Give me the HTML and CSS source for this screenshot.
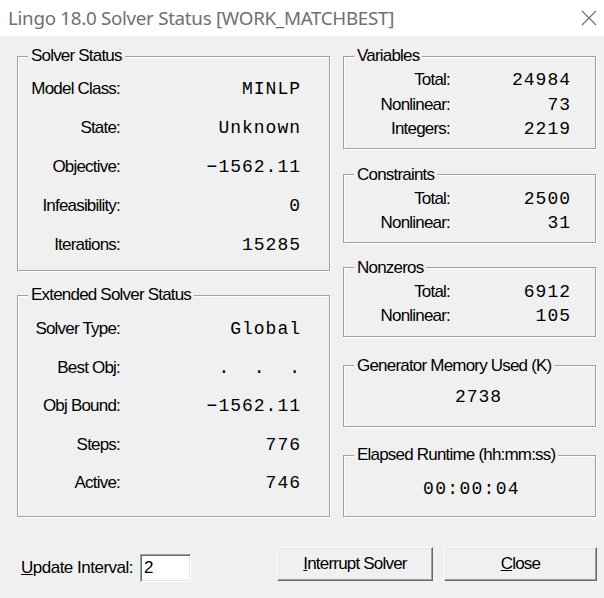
FILE: index.html
```html
<!DOCTYPE html>
<html>
<head>
<meta charset="utf-8">
<title>Lingo 18.0 Solver Status</title>
<link rel="stylesheet" href="styles.css">
</head>
<body>
<div class="titlebar">
  <span class="title">Lingo 18.0 Solver Status [WORK_MATCHBEST]</span>
  <svg class="close-x" width="16" height="16" viewBox="0 0 16 16"><path d="M1 1 L15 15 M15 1 L1 15" stroke="#6e6e6e" stroke-width="1.1" fill="none"/></svg>
</div>
<div class="main">
  <div class="col-left">
    <fieldset class="group g-solver">
      <legend>Solver Status</legend>
      <div class="rows-left r39">
        <span class="lbl">Model Class:</span><span class="val">MINLP</span>
        <span class="lbl">State:</span><span class="val">Unknown</span>
        <span class="lbl">Objective:</span><span class="val">&minus;1562.11</span>
        <span class="lbl">Infeasibility:</span><span class="val">0</span>
        <span class="lbl">Iterations:</span><span class="val">15285</span>
      </div>
    </fieldset>
    <fieldset class="group g-ext">
      <legend>Extended Solver Status</legend>
      <div class="rows-left r38">
        <span class="lbl">Solver Type:</span><span class="val">Global</span>
        <span class="lbl">Best Obj:</span><span class="val pre">.  .  .</span>
        <span class="lbl">Obj Bound:</span><span class="val">&minus;1562.11</span>
        <span class="lbl">Steps:</span><span class="val">776</span>
        <span class="lbl">Active:</span><span class="val">746</span>
      </div>
    </fieldset>
  </div>
  <div class="col-right">
    <fieldset class="group g-vars">
      <legend>Variables</legend>
      <div class="rows-right">
        <span class="lbl">Total:</span><span class="val">24984</span>
        <span class="lbl">Nonlinear:</span><span class="val">73</span>
        <span class="lbl">Integers:</span><span class="val">2219</span>
      </div>
    </fieldset>
    <fieldset class="group g-cons">
      <legend>Constraints</legend>
      <div class="rows-right">
        <span class="lbl">Total:</span><span class="val">2500</span>
        <span class="lbl">Nonlinear:</span><span class="val">31</span>
      </div>
    </fieldset>
    <fieldset class="group g-nz">
      <legend>Nonzeros</legend>
      <div class="rows-right">
        <span class="lbl">Total:</span><span class="val">6912</span>
        <span class="lbl">Nonlinear:</span><span class="val">105</span>
      </div>
    </fieldset>
    <fieldset class="group g-mem">
      <legend>Generator Memory Used (K)</legend>
      <div class="single mem-val">2738</div>
    </fieldset>
    <fieldset class="group g-time">
      <legend>Elapsed Runtime (hh:mm:ss)</legend>
      <div class="single time-val">00:00:04</div>
    </fieldset>
  </div>
</div>
<div class="bottom">
  <div class="interval">
    <span class="int-label"><u>U</u>pdate Interval:</span>
    <span class="input">2</span>
  </div>
  <div class="buttons">
    <span class="btn btn-int"><u>I</u>nterrupt Solver</span>
    <span class="btn btn-close"><u>C</u>lose</span>
  </div>
</div>
</body>
</html>
```
FILE: styles.css
```css
* { box-sizing: border-box; }
html, body { margin: 0; padding: 0; }
body {
  width: 604px;
  height: 598px;
  background: #f0f0f0;
  font-family: "Liberation Sans", Arial, sans-serif;
  font-size: 17px;
  letter-spacing: -0.8px;
  color: #000;
  overflow: hidden;
}
.titlebar {
  height: 36px;
  background: #fff;
  display: flex;
  align-items: center;
  justify-content: space-between;
  padding: 0 5px 0 8px;
}
.title {
  font-family: "Noto Sans", "Liberation Sans", sans-serif;
  font-size: 18.8px;
  letter-spacing: -0.3px;
  color: #707070;
  line-height: 20px;
}
.close-x { display: block; margin-right: 2px; }

.main {
  display: flex;
  gap: 13px;
  padding: 11px 0 0 17px;
}
.col-left { width: 313px; display: flex; flex-direction: column; }
.col-right { width: 253px; display: flex; flex-direction: column; }

.group {
  margin: 0;
  min-width: 0;
  border: 1px solid #a0a0a0;
  box-shadow: inset 1px 1px 0 #fff, 1px 1px 0 #fff;
  padding: 0 28px 0 10px;
}
.group legend {
  padding: 0 3px;
  line-height: 18px;
  height: 18px;
  background: #f0f0f0;
  white-space: nowrap;
}
.lbl { text-align: right; white-space: nowrap; }
.val {
  font-family: "Liberation Mono", "Courier New", monospace;
  font-size: 18px;
  letter-spacing: 1px;
  text-align: right;
  white-space: nowrap;
}
.pre { white-space: pre; }

.rows-left {
  display: grid;
  grid-template-columns: 92px 1fr;
  align-items: center;
}
.r39 { grid-auto-rows: 39px; }
.r38 { grid-auto-rows: 38.5px; }
.g-solver { padding-top: 4px; padding-bottom: 6px; }
.g-ext { margin-top: 15px; padding-top: 6px; padding-bottom: 13px; }

.col-right .group { padding-right: 24px; }
.rows-right {
  display: grid;
  grid-template-columns: 96px 1fr;
  grid-auto-rows: 24.5px;
  align-items: center;
}
.g-vars { padding-top: 3px; padding-bottom: 6px; }
.g-cons { margin-top: 17px; padding-top: 3px; padding-bottom: 6px; }
.g-nz { margin-top: 16px; padding-top: 3px; padding-bottom: 7px; }
.g-mem { margin-top: 20px; padding-top: 10px; padding-bottom: 17px; }
.g-time { margin-top: 19px; padding-top: 13px; padding-bottom: 14px; }
.single {
  height: 24.5px;
  line-height: 24.5px;
  text-align: center;
  font-family: "Liberation Mono", "Courier New", monospace;
  font-size: 18px;
  letter-spacing: 1px;
}
.mem-val { padding-left: 32px; }
.time-val { padding-left: 18px; letter-spacing: 1.3px; }

.bottom {
  display: flex;
  align-items: flex-start;
  justify-content: space-between;
  margin-top: 30px;
  padding: 0 7px 0 21px;
}
.interval {
  display: flex;
  align-items: center;
  gap: 5px;
  margin-top: 7px;
}
.int-label { white-space: nowrap; min-width: 114px; letter-spacing: -0.5px; }
.input {
  width: 51px;
  height: 28px;
  background: #fff;
  border: 1px solid;
  border-color: #a0a0a0 #fff #fff #a0a0a0;
  box-shadow: inset 1px 1px 0 #696969, inset -1px -1px 0 #e3e3e3;
  padding: 0 3px;
  line-height: 26px;
}
.buttons { display: flex; gap: 11px; }
.btn {
  height: 34px;
  line-height: 32px;
  text-align: center;
  background: #f0f0f0;
  border: 1px solid;
  border-color: #fff #696969 #696969 #fff;
  box-shadow: inset -1px -1px 0 #a0a0a0, inset 1px 1px 0 #e3e3e3;
  white-space: nowrap;
}
.btn-int { width: 156px; }
.btn-close { width: 153px; }
```
